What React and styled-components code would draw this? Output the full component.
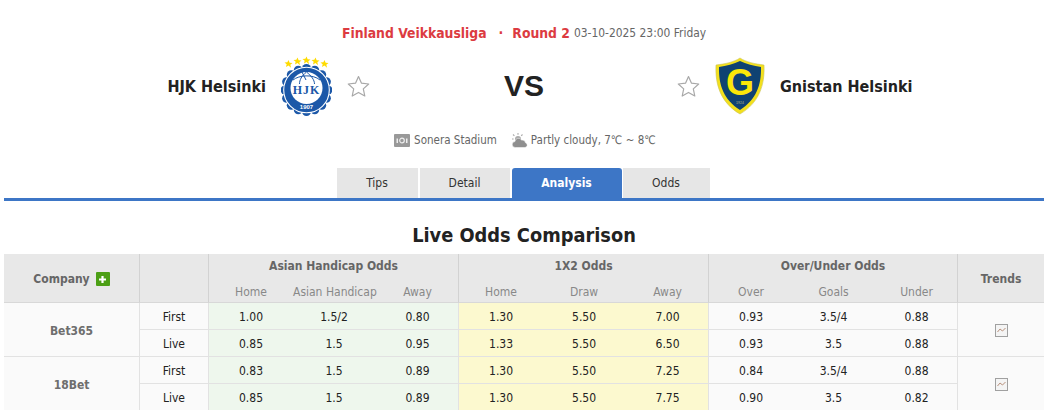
import React from 'react';
import styled, { createGlobalStyle } from 'styled-components';

const GlobalStyle = createGlobalStyle`
  html, body {
    margin: 0;
    padding: 0;
    background: #fff;
    overflow: hidden;
  }
  body {
    font-family: "DejaVu Sans Condensed", "DejaVu Sans", sans-serif;
    color: #222;
  }
`;

// Page
const Page = styled.div`
  width: 1053px;
  height: 410px;
  padding: 0 9px 0 4px;
  box-sizing: border-box;
  overflow: hidden;
`;

// Match header
const League = styled.div`
  height: 26px;
  margin-top: 20px;
  display: flex;
  align-items: center;
  justify-content: center;
`;

const LeagueName = styled.span`
  color: #dc3b41;
  font-size: 13.8px;
  font-weight: bold;
  white-space: nowrap;
`;

const LeagueDot = styled.span`
  color: #dc3b41;
  font-size: 14px;
  font-weight: bold;
  margin: 0 9px 0 12px;
`;

const Kickoff = styled.span`
  color: #666;
  font-size: 11.9px;
  margin-left: 4px;
`;

const Teams = styled.div`
  display: grid;
  grid-template-columns: 1fr 308px 1fr;
  align-items: center;
  height: 64px;
  margin-top: 8px;
`;

const Side = styled.div`
  display: flex;
  align-items: center;
  justify-content: ${p => (p.$away ? 'flex-start' : 'flex-end')};
`;

const TeamName = styled.span`
  font-size: 16px;
  font-weight: bold;
  color: #222;
  margin: ${p => (p.$away ? '0 0 0 15px' : '0 15px 0 0')};
  white-space: nowrap;
`;

const Versus = styled.div`
  text-align: center;
  font-family: "Liberation Sans", Arial, sans-serif;
  font-size: 30px;
  font-weight: bold;
  color: #222;
`;

const StarWrap = styled.svg`
  width: 23px;
  height: 22px;
  display: block;
  margin: ${p => (p.$away ? '0 15px 0 -1px' : '0 0 0 15px')};
`;

const Venue = styled.div`
  display: flex;
  align-items: center;
  justify-content: center;
  height: 20px;
  margin-top: 12px;
  padding-left: 2px;
  font-size: 11.5px;
  color: #666;
`;

const VenueItem = styled.span`
  display: flex;
  align-items: center;
  gap: ${p => (p.$first ? '4px' : '3px')};
  margin-right: ${p => (p.$first ? '15px' : '0')};
`;

// Tabs
const Tabs = styled.div`
  display: flex;
  justify-content: center;
  margin-top: 18px;
  height: 30px;
  border-bottom: 3px solid #3d76c6;
  padding-right: 2px;
`;

const Tab = styled.div`
  width: ${p => p.$w}px;
  margin-right: ${p => p.$gap}px;
  height: 30px;
  line-height: 31px;
  text-align: center;
  font-size: 12px;
  background: ${p => (p.$active ? '#3d76c6' : '#e6e6e6')};
  color: ${p => (p.$active ? '#fff' : '#333')};
  font-weight: ${p => (p.$active ? 'bold' : 'normal')};
  border-radius: ${p => (p.$active ? '3px 3px 0 0' : '0')};
`;

const Title = styled.h2`
  margin: 17px 0 0;
  height: 36px;
  line-height: 36px;
  text-align: center;
  font-size: 19.8px;
  font-weight: bold;
  color: #222;
`;

// Odds table
const OddsTable = styled.table`
  width: 1040px;
  border-collapse: separate;
  border-spacing: 0;
  table-layout: fixed;
  font-size: 12px;
`;

const HeadCell = styled.th`
  box-sizing: border-box;
  background: #e8e8e8;
  color: #666;
  font-weight: bold;
  font-size: 12px;
  height: 24px;
  padding: ${p => (p.$tall ? '2px 0 0' : '0')};
  text-align: center;
  white-space: nowrap;
  border-left: ${p => (p.$edge ? '1px solid #d2d2d2' : 'none')};
  border-bottom: ${p => (p.$tall ? '1px solid #d8d8d8' : 'none')};
`;

const SubHead = styled.th`
  box-sizing: border-box;
  background: #e8e8e8;
  color: #888;
  font-weight: normal;
  font-size: 12px;
  height: 25px;
  padding: 3px 0 0 2px;
  text-align: center;
  white-space: nowrap;
  border-left: ${p => (p.$edge ? '1px solid #d2d2d2' : 'none')};
  border-bottom: 1px solid #d8d8d8;
`;

const Cell = styled.td`
  box-sizing: border-box;
  height: 27px;
  padding: ${p => (p.$value ? '2px 0 0 2px' : '2px 0 0')};
  text-align: center;
  color: #222;
  background: ${p => p.$bg || '#fafafa'};
  border-bottom: 1px solid #e2e2e2;
  border-left: ${p => (p.$edge ? '1px solid #e2e2e2' : 'none')};
`;

const CompanyCell = styled(Cell)`
  font-weight: bold;
  color: #6e6e6e;
`;

const CompanyHead = styled.span`
  display: inline-flex;
  align-items: center;
  gap: 6px;
`;

const PlusBox = styled.span`
  width: 14px;
  height: 14px;
  border-radius: 1px;
  background: #4c9f15;
  display: inline-flex;
  align-items: center;
  justify-content: center;
`;

const green = '#eef7ed';
const yellow = '#fcf9cf';

const Star = ({ away }) => (
  <StarWrap $away={away} viewBox="0 0 23 22">
    <path d="M11.5 1.5l3 6.7 7.2.8-5.4 4.9 1.5 7.1-6.3-3.6-6.3 3.6 1.5-7.1L1.300 9l7.2-.8z" fill="#fff" stroke="#a8a8a8" strokeWidth="1.200" strokeLinejoin="round" />
  </StarWrap>
);

const HjkLogo = () => {
  const scallops = Array.from({ length: 16 }, (_, i) => {
    const a = (i * Math.PI * 2) / 16;
    return <circle key={i} cx={25.500 + 21.500 * Math.cos(a)} cy={34 + 21.500 * Math.sin(a)} r="4.500" fill="#1c58a8" />;
  });
  const stars = [[7.500, 8], [16.500, 5.500], [25.500, 4.500], [34.500, 5.500], [43.500, 8]];
  return (
    <svg width="51" height="60" viewBox="0 0 51 60" style={{ display: 'block' }}>
      {stars.map(([x, y], i) => (
        <path key={i} transform={`translate(${x} ${y}) scale(1.150)`} d="M0-3.500l1 2.400 2.500.2-1.900 1.600.6 2.500L0 1.400-2.200 2.700l.6-2.500-1.900-1.600 2.500-.2z" fill="#fedb00" />
      ))}
      {scallops}
      <circle cx="25.500" cy="34" r="22.500" fill="#1c58a8" />
      <circle cx="25.500" cy="34" r="22.800" fill="none" stroke="#fff" strokeWidth="1.100" />
      <circle cx="25.500" cy="32" r="16" fill="#fff" />
      <path d="M12 24c6-5 20-6 27 0M25.500 16c-5 4-7 8-7 12M25.500 16c5 4 8 8 8 12M21 16c1 3 3 5 4 8" fill="none" stroke="#1c58a8" strokeWidth="1" />
      <text x="25.500" y="38" textAnchor="middle" fontFamily="Liberation Serif, serif" fontWeight="bold" fontSize="12" letterSpacing="1" fill="#1c58a8">HJK</text>
      <text x="25.500" y="53" textAnchor="middle" fontFamily="Liberation Sans, sans-serif" fontWeight="bold" fontSize="6" fill="#fff">1907</text>
    </svg>
  );
};

const GnistanLogo = () => (
  <svg width="50" height="58" viewBox="0 0 50 58" style={{ display: 'block' }}>
    <path d="M25 1c6 4 15 6 24 7 1 20-5 38-24 49C6 46 0 28 1 8c9-1 18-3 24-7z" fill="#f3e01c" stroke="#c9c25a" strokeWidth=".6" />
    <path d="M25 4c6 3 14 5 21 6 .5 18-5 33-21 43C9 43 3.500 28 4 10c7-1 15-3 21-6z" fill="#0f4272" />
    <text x="25" y="38" textAnchor="middle" fontFamily="Liberation Sans, sans-serif" fontWeight="bold" fontSize="36" fill="#fbe609">G</text>
    <text x="25" y="47" textAnchor="middle" fontFamily="Liberation Sans, sans-serif" fontSize="3.500" fill="#b9b98a">1924</text>
  </svg>
);

const StadiumIcon = () => (
  <svg width="16" height="13" viewBox="0 0 16 13">
    <rect width="16" height="13" rx="1" fill="#999" />
    <rect x="2.500" y="4.500" width="1.500" height="4.500" fill="#eee" />
    <rect x="12" y="4.500" width="1.500" height="4.500" fill="#eee" />
    <circle cx="8" cy="6.500" r="2.300" fill="none" stroke="#eee" strokeWidth="1.200" />
  </svg>
);

const WeatherIcon = () => (
  <svg width="16" height="15" viewBox="0 0 16 15">
    <circle cx="6" cy="6" r="3" fill="#aaa" />
    <path d="M6 0v1.800M1 1.500l1.400 1.300M10.500 1.500L9.200 2.800M0 6h1.600" stroke="#aaa" strokeWidth="1.100" />
    <path d="M3.500 14.500a3 3 0 0 1-.5-6 3.500 3.500 0 0 1 6.500-1.500 3.500 3.500 0 0 1 4 2.800 2.400 2.400 0 0 1 -.5 4.700z" fill="#8f8f8f" stroke="#fff" strokeWidth=".5" />
  </svg>
);

const TrendIcon = () => (
  <svg width="13" height="13" viewBox="0 0 13 13" style={{ display: 'block', margin: '0 auto' }}>
    <rect x=".5" y=".5" width="12" height="12" fill="#f4f4f4" stroke="#a0a0a0" />
    <path d="M2.500 8l2.500-3 2.500 2 3-3" fill="none" stroke="#b8917c" strokeWidth="1" />
  </svg>
);

const companies = [
  {
    name: 'Bet365',
    rows: [
      ['First', '1.00', '1.5/2', '0.80', '1.30', '5.50', '7.00', '0.93', '3.5/4', '0.88'],
      ['Live', '0.85', '1.5', '0.95', '1.33', '5.50', '6.50', '0.93', '3.5', '0.88'],
    ],
  },
  {
    name: '18Bet',
    rows: [
      ['First', '0.83', '1.5', '0.89', '1.30', '5.50', '7.25', '0.84', '3.5/4', '0.88'],
      ['Live', '0.85', '1.5', '0.89', '1.30', '5.50', '7.75', '0.90', '3.5', '0.82'],
    ],
  },
];

const tabs = [
  { label: 'Tips', w: 81, gap: 2 },
  { label: 'Detail', w: 90, gap: 2 },
  { label: 'Analysis', w: 110, gap: 1, active: true },
  { label: 'Odds', w: 87, gap: 0 },
];

const subHeads = ['Home', 'Asian Handicap', 'Away', 'Home', 'Draw', 'Away', 'Over', 'Goals', 'Under'];
const colWidths = [135, 69, 83, 84, 83, 83, 84, 83, 83, 83, 83, 87];

const cellBg = i => (i < 3 ? green : i < 6 ? yellow : '#fafafa');

export default function App() {
  return (
    <Page>
      <GlobalStyle />
      <League>
        <LeagueName>Finland Veikkausliga</LeagueName>
        <LeagueDot>·</LeagueDot>
        <LeagueName>Round 2</LeagueName>
        <Kickoff>03-10-2025 23:00 Friday</Kickoff>
      </League>
      <Teams>
        <Side>
          <TeamName>HJK Helsinki</TeamName>
          <HjkLogo />
          <Star />
        </Side>
        <Versus>VS</Versus>
        <Side $away>
          <Star away />
          <GnistanLogo />
          <TeamName $away>Gnistan Helsinki</TeamName>
        </Side>
      </Teams>
      <Venue>
        <VenueItem $first><StadiumIcon />Sonera Stadium</VenueItem>
        <VenueItem><WeatherIcon />Partly cloudy, 7℃ ~ 8℃</VenueItem>
      </Venue>
      <Tabs>
        {tabs.map(t => (
          <Tab key={t.label} $w={t.w} $gap={t.gap} $active={t.active}>{t.label}</Tab>
        ))}
      </Tabs>
      <Title>Live Odds Comparison</Title>
      <OddsTable>
        <colgroup>
          {colWidths.map((w, i) => <col key={i} style={{ width: w }} />)}
        </colgroup>
        <thead>
          <tr>
            <HeadCell rowSpan={2} $tall><CompanyHead>Company <PlusBox><svg width="9" height="9" viewBox="0 0 9 9"><path d="M4.500 1v7M1 4.500h7" stroke="#fff" strokeWidth="2.200" /></svg></PlusBox></CompanyHead></HeadCell>
            <HeadCell rowSpan={2} $edge $tall />
            <HeadCell colSpan={3} $edge>Asian Handicap Odds</HeadCell>
            <HeadCell colSpan={3} $edge>1X2 Odds</HeadCell>
            <HeadCell colSpan={3} $edge>Over/Under Odds</HeadCell>
            <HeadCell rowSpan={2} $edge $tall>Trends</HeadCell>
          </tr>
          <tr>
            {subHeads.map((s, i) => <SubHead key={i} $edge={i % 3 === 0}>{s}</SubHead>)}
          </tr>
        </thead>
        <tbody>
          {companies.map(c => c.rows.map((row, r) => (
            <tr key={c.name + r}>
              {r === 0 && <CompanyCell rowSpan={2}>{c.name}</CompanyCell>}
              <Cell $edge>{row[0]}</Cell>
              {row.slice(1).map((v, i) => (
                <Cell key={i} $value $bg={cellBg(i)} $edge={i % 3 === 0}>{v}</Cell>
              ))}
              {r === 0 && <Cell rowSpan={2} $edge><TrendIcon /></Cell>}
            </tr>
          )))}
        </tbody>
      </OddsTable>
    </Page>
  );
}
